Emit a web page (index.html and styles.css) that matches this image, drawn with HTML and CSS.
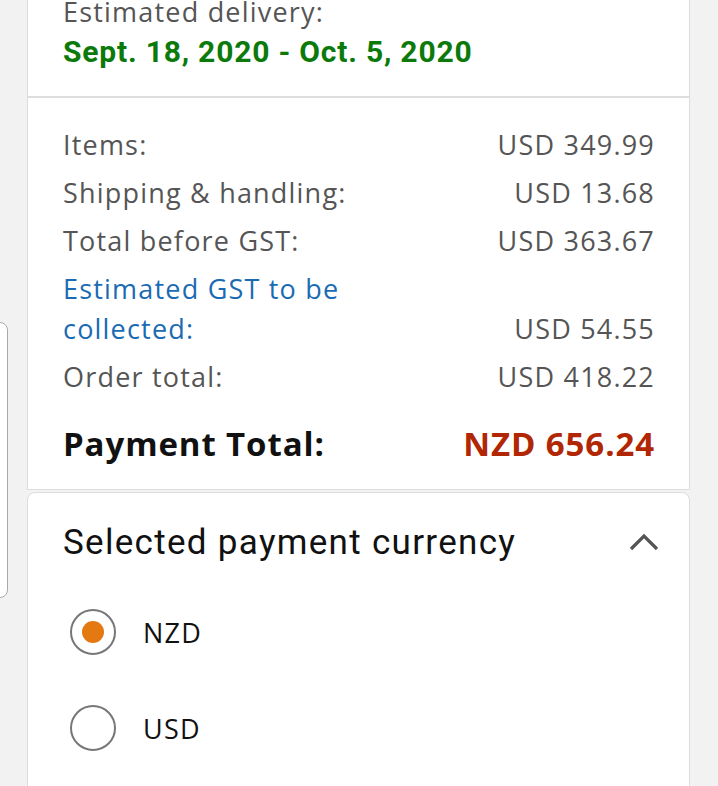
FILE: index.html
```html
<!DOCTYPE html>
<html>
<head>
<meta charset="utf-8">
<link rel="stylesheet" href="styles.css">
</head>
<body>
<div class="edge-tab"></div>
<main class="page">
  <section class="card delivery">
    <div class="muted">Estimated delivery:</div>
    <div class="date">Sept. 18, 2020 - Oct. 5, 2020</div>
  </section>
  <section class="card summary">
    <div class="row"><span>Items:</span><span>USD 349.99</span></div>
    <div class="row"><span>Shipping &amp; handling:</span><span>USD 13.68</span></div>
    <div class="row"><span>Total before GST:</span><span>USD 363.67</span></div>
    <div class="row gst"><span class="link">Estimated GST to be<br>collected:</span><span>USD 54.55</span></div>
    <div class="row"><span>Order total:</span><span>USD 418.22</span></div>
    <div class="row total"><span>Payment Total:</span><span class="price">NZD 656.24</span></div>
  </section>
  <section class="card currency">
    <div class="head">
      <span class="title">Selected payment currency</span>
      <svg class="chev" width="30" height="20" viewBox="0 0 30 20"><path d="M2 17 L15 4 L28 17" fill="none" stroke="#555" stroke-width="3.2"/></svg>
    </div>
    <label class="opt"><span class="radio on"></span><span>NZD</span></label>
    <label class="opt"><span class="radio"></span><span>USD</span></label>
  </section>
</main>
</body>
</html>
```
FILE: styles.css
```css
html, body { margin: 0; padding: 0; }
body {
  background: #f2f2f2;
  font-family: "Open Sans", "Noto Sans", sans-serif;
  width: 718px;
  height: 786px;
  overflow: hidden;
  position: relative;
}
.edge-tab {
  position: absolute;
  left: -20px;
  top: 322px;
  width: 26px;
  height: 274px;
  border: 1.5px solid #aaa;
  border-radius: 8px;
  background: #fff;
}
.page {
  padding-left: 27px;
  width: 663px;
}
.card {
  background: #fff;
  border: 1px solid #ddd;
  box-sizing: border-box;
}
.delivery {
  margin-top: -8px;
  padding: 0 35px 24px;
  border-top: none;
  border-bottom: 2px solid #ddd;
}
.muted {
  color: #555;
  font-size: 27px;
  letter-spacing: 1.2px;
  line-height: 40px;
}
.date {
  font-family: Roboto, sans-serif;
  color: #0b7a0b;
  font-weight: 700;
  font-size: 30px;
  letter-spacing: 0.8px;
  line-height: 40px;
}
.summary {
  border-top: none;
  padding: 27px 34px 25px 35px;
}
.row {
  display: flex;
  justify-content: space-between;
  align-items: flex-end;
  color: #555;
  font-size: 27px;
  letter-spacing: 1.2px;
  line-height: 40px;
  margin-bottom: 8px;
}
.link { color: #1a6bb3; }
.row.total {
  margin-top: 27px;
  margin-bottom: 0;
  color: #111;
  font-weight: 700;
  font-size: 33px;
  letter-spacing: 0.9px;
}
.price { color: #b12704; }
.currency {
  margin-top: 2px;
  border-radius: 8px 8px 0 0;
  padding: 27px 35px 0;
  height: 300px;
}
.head {
  display: flex;
  justify-content: space-between;
  align-items: center;
  height: 44px;
}
.title {
  font-family: Roboto, sans-serif;
  font-size: 35px;
  letter-spacing: 1.3px;
  color: #111;
}
.chev { margin-right: -5px; }
.opt {
  display: flex;
  align-items: center;
  gap: 27px;
  height: 48px;
  margin-top: 44px;
  font-size: 27px;
  letter-spacing: 1.2px;
  color: #111;
}
.opt + .opt { margin-top: 48px; }
.radio {
  width: 46px;
  height: 46px;
  box-sizing: border-box;
  border: 2px solid #777;
  border-radius: 50%;
  margin-left: 7px;
  display: flex;
  align-items: center;
  justify-content: center;
}
.radio.on::after {
  content: "";
  width: 22px;
  height: 22px;
  border-radius: 50%;
  background: #e47911;
}
```
